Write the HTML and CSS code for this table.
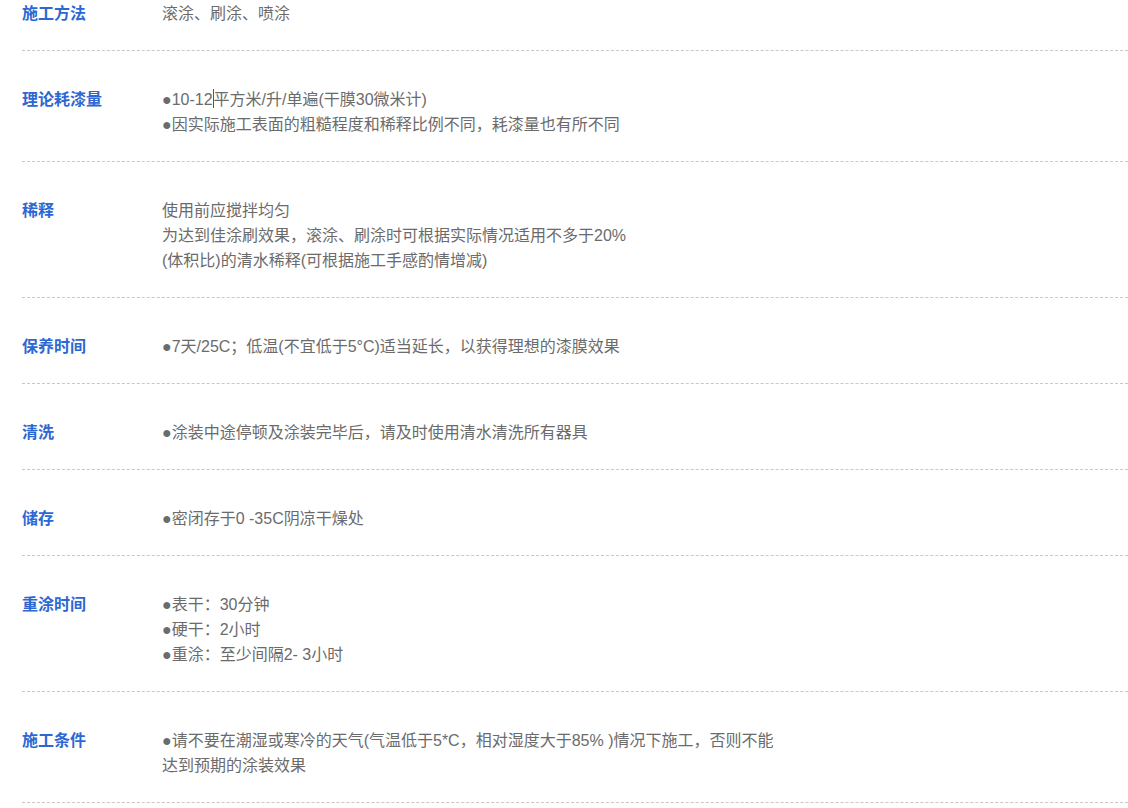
FILE: index.html
```html
<html>
<head>
    <title>施工说明</title>
    <link rel="stylesheet" href="styles.css">
</head>
<body>
    <div class="specs">
        <div class="spec">
            <div class="label">施工方法</div>
            <div class="value">滚涂、刷涂、喷涂</div>
        </div>
        <div class="spec">
            <div class="label">理论耗漆量</div>
            <div class="value">
                <p>●10-12<span class="caret"></span>平方米/升/单遍(干膜30微米计)</p>
                <p>●因实际施工表面的粗糙程度和稀释比例不同，耗漆量也有所不同</p>
            </div>
        </div>
        <div class="spec">
            <div class="label">稀释</div>
            <div class="value">
                <p>使用前应搅拌均匀</p>
                <p>为达到佳涂刷效果，滚涂、刷涂时可根据实际情况适用不多于20%</p>
                <p>(体积比)的清水稀释(可根据施工手感酌情增减)</p>
            </div>
        </div>
        <div class="spec">
            <div class="label">保养时间</div>
            <div class="value">●7天/25C；低温(不宜低于5°C)适当延长，以获得理想的漆膜效果</div>
        </div>
        <div class="spec">
            <div class="label">清洗</div>
            <div class="value">●涂装中途停顿及涂装完毕后，请及时使用清水清洗所有器具</div>
        </div>
        <div class="spec">
            <div class="label">储存</div>
            <div class="value">●密闭存于0 -35C阴凉干燥处</div>
        </div>
        <div class="spec">
            <div class="label">重涂时间</div>
            <div class="value">
                <p>●表干：30分钟</p>
                <p>●硬干：2小时</p>
                <p>●重涂：至少间隔2- 3小时</p>
            </div>
        </div>
        <div class="spec">
            <div class="label">施工条件</div>
            <div class="value">
                <p>●请不要在潮湿或寒冷的天气(气温低于5*C，相对湿度大于85% )情况下施工，否则不能<br>达到预期的涂装效果</p>
            </div>
        </div>
    </div>
</body>
</html>
```

FILE: styles.css
```css
body {
    margin: 0;
    padding: 0;
    background-color: #fff;
    font-family: "Liberation Sans", "Noto Sans CJK SC", sans-serif;
    font-size: 16px;
    line-height: 25px;
}
.specs {
    padding-left: 22px;
}
.spec {
    display: flex;
    padding: 36px 0 24px;
    border-bottom: 1px dashed #c8c8c8;
}
.spec:first-child {
    padding-top: 1px;
}
.label {
    width: 140px;
    flex-shrink: 0;
    font-weight: bold;
    color: #2d68d2;
}
.value {
    color: #6b6b6b;
}
.value p {
    margin: 0;
}
.caret {
    display: inline-block;
    width: 0;
    height: 19px;
    vertical-align: -3px;
    border-left: 1px solid #555;
}
```
